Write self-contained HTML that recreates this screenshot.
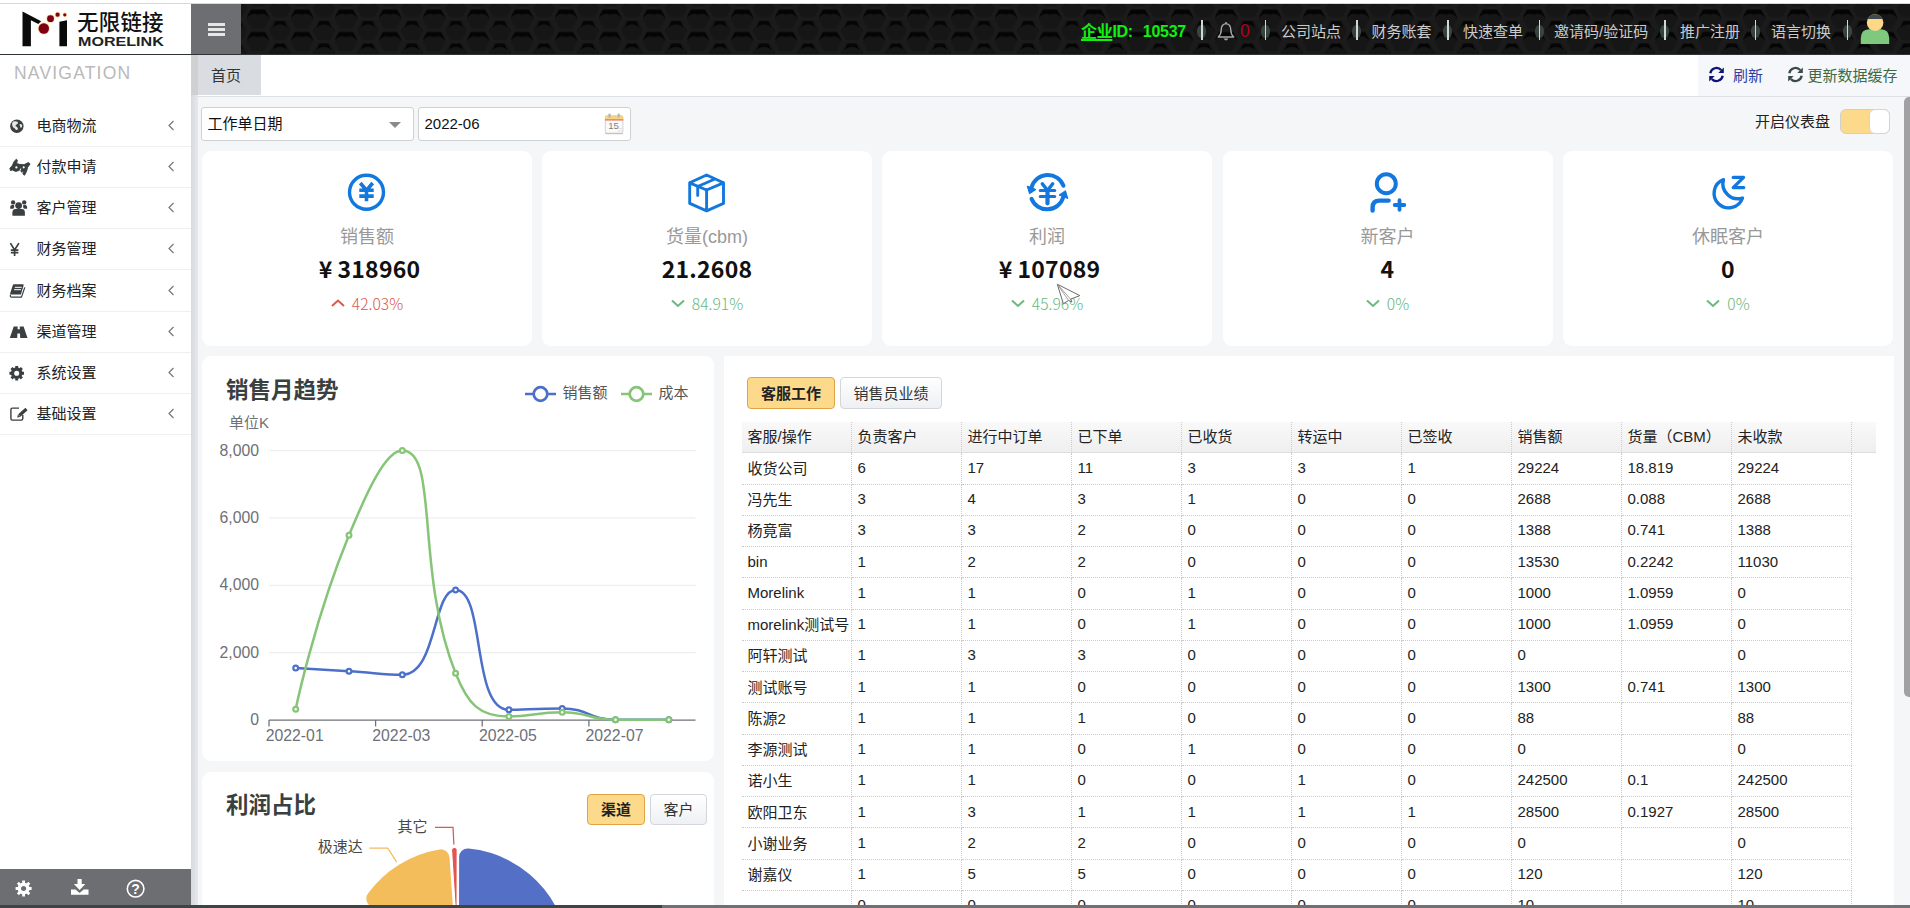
<!DOCTYPE html><html lang="zh"><head><meta charset="utf-8"><title>无限链接 MORELINK</title><style>
*{box-sizing:border-box;margin:0;padding:0}
html,body{width:1910px;height:908px;overflow:hidden;background:#fff}
body{font-family:"Liberation Sans","Noto Sans CJK SC",sans-serif;font-size:15px;color:#222;position:relative}
.abs{position:absolute}
.t{position:absolute;white-space:nowrap;line-height:1}
#hdr{left:191px;top:4px;width:1719px;height:50px;background:#171717;overflow:hidden}
#hdr svg.pat{position:absolute;left:0;top:0}
.hitem{position:absolute;top:0;height:50px;line-height:55px;color:#cacaca;font-size:15px;white-space:nowrap}
.hdiv{position:absolute;top:16px;width:1.400px;height:20px;background:#d4d6d6}
.hglow{position:absolute;top:21px;width:9px;height:13px;background:#3e4b4c;border-radius:45%;opacity:.85}
#side{left:0;top:55px;width:191px;height:814px;background:#fff}
.nav{position:absolute;left:0;width:191px;height:41.25px;border-bottom:1px solid #efefef}
.nav .lbl{position:absolute;left:36px;top:0;line-height:41px;font-size:15px;color:#222}
.nav svg.ic{position:absolute;left:9px;top:12px}
.nav .chev{position:absolute;left:167px;top:14px}
.card{position:absolute;background:#fff;border-radius:9px}
.kt{position:absolute;left:0;width:100%;text-align:center;white-space:nowrap}
.klabel{top:75.500px;font-size:18px;color:#999;line-height:20px}
.kval{top:101.500px;letter-spacing:0.25px;font-size:23px;font-weight:bold;color:#111;line-height:30px;font-family:"Noto Sans CJK SC","Liberation Sans",sans-serif}
.kpct{top:143px;font-size:15.600px;line-height:18px}
.btn{position:absolute;height:32px;border:1px solid #d3d6da;border-radius:4px;background:linear-gradient(#fff,#eef0f3);font-size:15px;line-height:31px;text-align:center;color:#333}
.btn.on{background:#fdd98c;border-color:#e0a542;font-weight:bold;color:#222}
table.g{position:absolute;border-collapse:separate;border-spacing:0;table-layout:fixed}
table.g td{height:31.25px;padding:0 0 2px 6px;font-size:15px;color:#222;border-right:1px dotted #ccc;border-bottom:1px dotted #ccc;white-space:nowrap;overflow:hidden}
table.g tr.h td{background:linear-gradient(#f9f9f9,#efefef);border-bottom:1px solid #ddd;padding-bottom:3px}
</style></head><body>
<div class="abs" style="left:0;top:3px;width:1910px;height:1px;background:#d5d9dd"></div>
<div class="abs" style="left:0;top:4px;width:191px;height:51px;background:#fff;border-bottom:1px solid #3a3f42"></div>
<svg class="abs" style="left:0;top:4px" width="191" height="50" viewBox="0 4 191 50">
<polygon points="22.5,11.6 41.2,21.2 38.3,23.9 30.9,20.2 30.9,46.3 22.5,46.3" fill="#0a0a0a"/>
<polygon points="59.4,21.8 67,20.3 67,46.3 59.4,46.3" fill="#0a0a0a"/>
<circle cx="43.8" cy="28.5" r="5.9" fill="#f6d98a"/><circle cx="43.8" cy="28.5" r="5.2" fill="#7d0014"/>
<circle cx="50.5" cy="18.7" r="4.1" fill="#f6d98a"/><circle cx="50.5" cy="18.7" r="3.4" fill="#7d0014"/>
<circle cx="57.6" cy="14.7" r="2.8" fill="#f6d98a"/><circle cx="57.6" cy="14.7" r="2.1" fill="#8a0016"/>
<circle cx="64.8" cy="14.8" r="2.2" fill="#f6d98a"/><circle cx="64.8" cy="14.8" r="1.6" fill="#8a0016"/>
</svg>
<div class="t" style="left:77px;top:9px;font-size:21.5px;font-weight:500;color:#111;letter-spacing:0.2px;font-family:'Noto Sans CJK SC',sans-serif;line-height:24px">无限链接</div>
<div class="t" style="left:77.5px;top:35px;font-size:13.2px;font-weight:bold;color:#222;line-height:13px;transform-origin:0 0;transform:scaleX(1.22)">MORELINK</div>
<div id="hdr" class="abs">
<svg class="pat" width="1719" height="51"><defs><pattern id="hx" x="12" y="4" width="44" height="22.500" patternUnits="userSpaceOnUse">
<rect width="44" height="22.500" fill="#1b1b1b"/>
<path d="M-0.500 11.250 L4.800 1.800 H17.200 L22.500 11.250 L17.200 20.700 H4.800 Z" fill="#161616"/>
<path d="M21.500 0 L26.800 -9.450 H39.200 L44.500 0 L39.200 9.450 H26.800 Z" fill="#161616"/>
<path d="M21.500 22.500 L26.800 13.050 H39.200 L44.500 22.500 L39.200 31.950 H26.800 Z" fill="#161616"/>
<path d="M-1.300 10.800 L3.900 1.500 H18.100 L23.300 10.800 L20 7.900 Q15.500 4.600 11 6.900 Q6.500 4.600 2 7.900 Z" fill="#050505"/>
<path d="M25.500 20 L28.500 13.050 H37.500 L40.500 20 L38 17.800 Q33 14.800 28 17.800 Z" fill="#050505"/>
<path d="M25.500 -2.500 L28.500 -9.450 H37.500 L40.500 -2.500 L38 -4.700 Q33 -7.700 28 -4.700 Z" fill="#050505"/>
</pattern></defs><rect width="1719" height="51" fill="url(#hx)"/></svg>
<div class="abs" style="left:0;top:0;width:50px;height:50px;background:#6d6e72"></div>
<div class="abs" style="left:17.300px;top:18.800px;width:16.500px;height:2.900px;background:#e6e6e6;box-shadow:0 5px 0 #e6e6e6,0 10px 0 #e6e6e6"></div>
<div class="hitem" style="left:890px;color:#10f010;font-weight:bold;font-size:16px;letter-spacing:-0.3px"><span style="text-decoration:underline;text-decoration-thickness:1.5px;text-underline-offset:2px">企业</span>ID:<span style="margin-left:10px">10537</span></div>
<div class="hglow" style="left:1006.2px"></div>
<div class="hdiv" style="left:1010.2px"></div>
<div class="hglow" style="left:1069.9px"></div>
<div class="hdiv" style="left:1073.9px"></div>
<div class="hglow" style="left:1161.2px"></div>
<div class="hdiv" style="left:1165.2px"></div>
<div class="hglow" style="left:1252.3px"></div>
<div class="hdiv" style="left:1256.3px"></div>
<div class="hglow" style="left:1343.9px"></div>
<div class="hdiv" style="left:1347.9px"></div>
<div class="hglow" style="left:1469.2px"></div>
<div class="hdiv" style="left:1473.2px"></div>
<div class="hglow" style="left:1560.1px"></div>
<div class="hdiv" style="left:1564.1px"></div>
<div class="hglow" style="left:1651.7px"></div>
<div class="hdiv" style="left:1655.7px"></div>
<svg class="abs" style="left:1025px;top:17px" width="20" height="22" viewBox="0 0 20 22"><path d="M10 2.600 C6 3.100 5.200 6.500 5.200 9 C5.200 12.500 4 14.500 2.200 16 H17.800 C16 14.500 14.800 12.500 14.800 9 C14.800 6.500 14 3.100 10 2.600 Z" fill="none" stroke="#a4a6a8" stroke-width="1.400" stroke-linejoin="round"/><path d="M7.600 17.500 Q10 21.500 12.400 17.500 Z" fill="#a4a6a8"/><circle cx="10" cy="2" r="1" fill="#a4a6a8"/></svg>
<div class="hitem" style="left:1049px;color:#b00020;font-size:17.500px">0</div>
<div class="hitem" style="left:1090.0px">公司站点</div>
<div class="hitem" style="left:1180.5px">财务账套</div>
<div class="hitem" style="left:1272.0px">快速查单</div>
<div class="hitem" style="left:1363.0px">邀请码/验证码</div>
<div class="hitem" style="left:1489.0px">推广注册</div>
<div class="hitem" style="left:1580.0px">语言切换</div>
<svg class="abs" style="left:1668px;top:8px" width="32" height="34" viewBox="1859 12 32 34">
<path d="M1860.8 44 V38 Q1861 29.5 1869 29.2 H1881 Q1889 29.5 1889.2 38 V44 Z" fill="#7fc97f"/>
<circle cx="1875.100" cy="22.6" r="8.3" fill="#fdd888"/>
<path d="M1867.6 19 A8.3 8.3 0 0 1 1882.600 19 Z" fill="#3f4a4c"/></svg>
</div>
<div class="abs" style="left:0;top:54px;width:1910px;height:1px;background:#2e3335;z-index:2"></div>
<div id="side" class="abs">
<div class="t" style="left:14px;top:9px;font-size:17.5px;letter-spacing:1.2px;color:#b9b9b9;line-height:18px">NAVIGATION</div>
<div class="abs" style="left:0;top:91px;width:191px;height:1px;background:#efefef"></div>
<div class="t" style="left:36.500px;top:60.7px;font-size:15px;color:#222;line-height:20px">电商物流</div>
<svg class="abs" style="left:167px;top:64.2px" width="8" height="13" viewBox="0 0 8 13"><path d="M6.500 2 L2 6.500 L6.500 11" fill="none" stroke="#777" stroke-width="1.200"/></svg>
<div class="abs" style="left:0;top:132px;width:191px;height:1px;background:#efefef"></div>
<div class="t" style="left:36.500px;top:101.7px;font-size:15px;color:#222;line-height:20px">付款申请</div>
<svg class="abs" style="left:167px;top:105.2px" width="8" height="13" viewBox="0 0 8 13"><path d="M6.500 2 L2 6.500 L6.500 11" fill="none" stroke="#777" stroke-width="1.200"/></svg>
<div class="abs" style="left:0;top:173px;width:191px;height:1px;background:#efefef"></div>
<div class="t" style="left:36.500px;top:142.7px;font-size:15px;color:#222;line-height:20px">客户管理</div>
<svg class="abs" style="left:167px;top:146.2px" width="8" height="13" viewBox="0 0 8 13"><path d="M6.500 2 L2 6.500 L6.500 11" fill="none" stroke="#777" stroke-width="1.200"/></svg>
<div class="abs" style="left:0;top:214px;width:191px;height:1px;background:#efefef"></div>
<div class="t" style="left:36.500px;top:183.7px;font-size:15px;color:#222;line-height:20px">财务管理</div>
<svg class="abs" style="left:167px;top:187.2px" width="8" height="13" viewBox="0 0 8 13"><path d="M6.500 2 L2 6.500 L6.500 11" fill="none" stroke="#777" stroke-width="1.200"/></svg>
<div class="abs" style="left:0;top:256px;width:191px;height:1px;background:#efefef"></div>
<div class="t" style="left:36.500px;top:225.7px;font-size:15px;color:#222;line-height:20px">财务档案</div>
<svg class="abs" style="left:167px;top:229.2px" width="8" height="13" viewBox="0 0 8 13"><path d="M6.500 2 L2 6.500 L6.500 11" fill="none" stroke="#777" stroke-width="1.200"/></svg>
<div class="abs" style="left:0;top:297px;width:191px;height:1px;background:#efefef"></div>
<div class="t" style="left:36.500px;top:266.7px;font-size:15px;color:#222;line-height:20px">渠道管理</div>
<svg class="abs" style="left:167px;top:270.2px" width="8" height="13" viewBox="0 0 8 13"><path d="M6.500 2 L2 6.500 L6.500 11" fill="none" stroke="#777" stroke-width="1.200"/></svg>
<div class="abs" style="left:0;top:338px;width:191px;height:1px;background:#efefef"></div>
<div class="t" style="left:36.500px;top:307.7px;font-size:15px;color:#222;line-height:20px">系统设置</div>
<svg class="abs" style="left:167px;top:311.2px" width="8" height="13" viewBox="0 0 8 13"><path d="M6.500 2 L2 6.500 L6.500 11" fill="none" stroke="#777" stroke-width="1.200"/></svg>
<div class="abs" style="left:0;top:379px;width:191px;height:1px;background:#efefef"></div>
<div class="t" style="left:36.500px;top:348.7px;font-size:15px;color:#222;line-height:20px">基础设置</div>
<svg class="abs" style="left:167px;top:352.2px" width="8" height="13" viewBox="0 0 8 13"><path d="M6.500 2 L2 6.500 L6.500 11" fill="none" stroke="#777" stroke-width="1.200"/></svg>
<svg class="abs" style="left:0;top:0" width="191" height="814" viewBox="0 55 191 814">
<circle cx="16.850" cy="126.200" r="6.700" fill="#3a3f42"/>
<path d="M13.200 121.600 Q15.500 120.600 17.600 121.800 Q18.600 123.400 17 124.300 Q15.200 124.600 15.600 126.300 Q17.400 126.800 18 128.400 Q17.400 130.600 15.800 129.800 Q14.800 127.800 13 127.200 Q11.600 125.200 12.200 123 Z M19.600 124 Q21.400 123.600 22.200 125.400 Q22 127.600 20.800 128 Q19.600 126.400 19.600 124 Z" fill="#fff" opacity=".88"/>
<path d="M9.900 168.300 L12.300 165.500 L14.300 161.200 L16.400 159.200 L17.400 160.300 L16.600 163.400 L19.300 164.300 L20.600 166.800 L19.200 170.400 L15.600 171.500 L12.600 170.100 L10.400 170.600 Z" fill="#3a3f42" stroke="#3a3f42" stroke-width=".9" stroke-linejoin="round"/>
<path d="M19.800 164.300 L24 164.700 L28.400 162.500 L30.100 163.900 L27.600 167.400 L26.700 171 L24.600 175.200 L22.900 174.100 L23.700 171.600 L21.400 172.100 L20.800 170.100 L22.400 168.700 L20.400 168.100 Z" fill="#3a3f42" stroke="#3a3f42" stroke-width=".9" stroke-linejoin="round"/>
<circle cx="16.400" cy="167.400" r="1.150" fill="#fff"/><circle cx="23.700" cy="167.300" r="1.100" fill="#fff"/>
<circle cx="18.650" cy="205.600" r="3.400" fill="#3a3f42"/>
<path d="M12.400 215.700 V212.600 Q12.500 209.300 15.400 209.100 H21.900 Q24.800 209.300 24.900 212.600 V215.700 Z" fill="#3a3f42"/>
<circle cx="13.100" cy="202.400" r="2.200" fill="#3a3f42"/><circle cx="24.200" cy="202.400" r="2.200" fill="#3a3f42"/>
<path d="M10.200 208.800 V206.800 Q10.300 204.900 12.200 204.900 H14 Q14.800 207 13.400 208.800 Z M27.100 208.800 V206.800 Q27 204.900 25.100 204.900 H23.300 Q22.500 207 23.900 208.800 Z" fill="#3a3f42"/>
<path d="M10.400 243.100 L14.600 249.900 L18.900 243.100 M14.600 249.500 V256 M10.800 250.100 H18.400 M10.800 252.700 H18.400" fill="none" stroke="#3a3f42" stroke-width="1.700"/>
<path d="M14 284.300 H22.800 Q23.900 284.300 23.600 285.500 L20.900 294.400 H11 Q9.800 294.400 10.200 293.200 L12.800 285.300 Q13.200 284.300 14 284.300 Z" fill="#3a3f42"/>
<path d="M10.600 294.600 Q9.700 297.100 11.800 297.100 H21.500 L24.800 287.400" fill="none" stroke="#3a3f42" stroke-width="1.200" stroke-linejoin="round"/>
<path d="M14.800 287.300 H21.800 M14.100 289.700 H21.100" stroke="#fff" stroke-width="1"/>
<path d="M13.700 326.400 H17.700 L17.200 338 H9.800 Z M19.700 326.400 H23.600 L27.500 338 H20.200 Z M17.300 329.200 H20 V333.400 H17.300 Z" fill="#3a3f42"/>
<circle cx="16.700" cy="373.200" r="4.200" fill="none" stroke="#3a3f42" stroke-width="3.300"/>
<g stroke="#3a3f42" stroke-width="2.900" transform="translate(16.700 373.200)"><path d="M0 -7.300 V-5 M0 5 V7.300 M-7.300 0 H-5 M5 0 H7.300 M-5.200 -5.200 L-3.500 -3.500 M3.500 3.500 L5.200 5.200 M-5.200 5.200 L-3.500 3.500 M3.500 -3.500 L5.200 -5.200"/></g>
<path d="M22.800 415 V418.600 Q22.800 420.100 21.300 420.100 H12.400 Q10.900 420.100 10.900 418.600 V409.600 Q10.900 408.100 12.400 408.100 H19" fill="none" stroke="#3a3f42" stroke-width="1.400"/>
<path d="M19.300 415.500 L26.500 409" stroke="#3a3f42" stroke-width="3.200"/><path d="M17.200 417.600 L17.900 414.400 L20.400 416.900 Z" fill="#3a3f42"/>
</svg>
</div>
<div class="abs" style="left:0;top:869px;width:191px;height:36px;background:#6d6e72"></div>
<svg class="abs" style="left:0;top:869px" width="191" height="36" viewBox="0 869 191 36">
<g transform="translate(23.600 888.500)"><circle r="4.300" fill="none" stroke="#fff" stroke-width="3.400"/><g stroke="#fff" stroke-width="2.800"><path d="M0 -8 V-5 M0 5 V8 M-8 0 H-5 M5 0 H8 M-5.700 -5.700 L-3.600 -3.600 M3.600 3.600 L5.700 5.700 M-5.700 5.700 L-3.600 3.600 M3.600 -3.600 L5.700 -5.700"/></g></g>
<path d="M77.500 879 H81.700 V884 H85.300 L79.600 890 L73.900 884 H77.500 Z" fill="#fff"/><path d="M71 889.500 H75.500 L79.600 893 L83.700 889.500 H88.500 V894.800 H71 Z" fill="#fff"/>
<circle cx="135.600" cy="888.700" r="8.300" fill="none" stroke="#fff" stroke-width="1.600"/>
<text x="135.600" y="894" text-anchor="middle" font-family="Liberation Sans,sans-serif" font-weight="bold" font-size="14" fill="#fff">?</text>
</svg>
<div class="abs" style="left:191px;top:55px;width:7px;height:40px;background:#cfd0d0"></div>
<div class="abs" style="left:191px;top:95px;width:7px;height:810px;background:linear-gradient(90deg,#d6d9dd,#e6e8ec)"></div>
<div class="abs" style="left:198px;top:55px;width:1712px;height:41px;background:#fff"></div>
<div class="abs" style="left:198px;top:55px;width:63px;height:40px;background:#d9dde1"></div>
<div class="t" style="left:211px;top:67px;font-size:15px;color:#333;line-height:17px">首页</div>
<div class="abs" style="left:1698px;top:55px;width:212px;height:41px;background:#f5f7fa"></div>
<div class="abs" style="left:198px;top:96px;width:1712px;height:1px;background:#dcdfe3"></div>
<svg class="abs" style="left:1707.5px;top:66.0px" width="17" height="17" viewBox="0 0 17 17"><path d="M2.300 7.200 A6.300 6.300 0 0 1 13.200 4.100" fill="none" stroke="#10107a" stroke-width="2.300"/><path d="M15.800 1.500 V7 H10.300 Z" fill="#10107a"/><path d="M14.700 9.800 A6.300 6.300 0 0 1 3.800 12.900" fill="none" stroke="#10107a" stroke-width="2.300"/><path d="M1.200 15.500 V10 H6.700 Z" fill="#10107a"/></svg>
<div class="t" style="left:1733px;top:67px;font-size:15px;color:#2a3fa8;line-height:17px">刷新</div>
<svg class="abs" style="left:1787.0px;top:66.0px" width="17" height="17" viewBox="0 0 17 17"><path d="M2.300 7.200 A6.300 6.300 0 0 1 13.200 4.100" fill="none" stroke="#3c4a44" stroke-width="2.300"/><path d="M15.800 1.500 V7 H10.300 Z" fill="#3c4a44"/><path d="M14.700 9.800 A6.300 6.300 0 0 1 3.800 12.900" fill="none" stroke="#3c4a44" stroke-width="2.300"/><path d="M1.200 15.500 V10 H6.700 Z" fill="#3c4a44"/></svg>
<div class="t" style="left:1807.500px;top:67px;font-size:15px;color:#3f6a42;line-height:17px">更新数据缓存</div>
<div class="abs" style="left:198px;top:97px;width:1712px;height:808px;background:#f5f6f8"></div>
<div class="abs" style="left:1904px;top:97px;width:8px;height:600px;background:#a1a1a3;border-radius:5px 0 0 5px"></div>
<div class="abs" style="left:201px;top:107px;width:213px;height:34px;background:#fff;border:1px solid #cfd2d5;border-radius:3px"></div>
<div class="t" style="left:207.500px;top:115px;font-size:15px;color:#111;line-height:18px">工作单日期</div>
<div class="abs" style="left:389px;top:121.500px;width:0;height:0;border-left:6px solid transparent;border-right:6px solid transparent;border-top:6.500px solid #8a8a8a"></div>
<div class="abs" style="left:418px;top:107px;width:213px;height:34px;background:#fff;border:1px solid #cfd2d5;border-radius:3px"></div>
<div class="t" style="left:424.500px;top:115px;font-size:15px;color:#111;line-height:18px">2022-06</div>
<svg class="abs" style="left:603px;top:112px" width="22" height="24" viewBox="603 112 22 24"><rect x="605.300" y="116" width="17.600" height="17.200" rx="1.500" fill="#fafafa" stroke="#d2d2d2"/><path d="M605.300 133.600 H622.900" stroke="#c4c4c4" stroke-width="1.200"/><path d="M605 119.500 V117 Q605 115.200 606.800 115.200 H621.400 Q623.200 115.200 623.200 117 V119.500 Z" fill="#f8d37c"/><rect x="605" y="119.300" width="18.200" height="1.200" fill="#e0695c"/><rect x="608.400" y="113.500" width="2.200" height="4.200" rx="1" fill="#b5b5b5"/><rect x="617.600" y="113.500" width="2.200" height="4.200" rx="1" fill="#b5b5b5"/><text x="613.600" y="128.600" font-size="9.500" text-anchor="middle" font-family="Liberation Sans,sans-serif" fill="#7d7d7d">15</text><path d="M618.500 128.500 H622 M618.500 131 H622" stroke="#c8c8c8" stroke-width="1" stroke-dasharray="1 1"/></svg>
<div class="t" style="left:1755px;top:112.500px;font-size:15px;color:#222;line-height:18px">开启仪表盘</div>
<div class="abs" style="left:1840px;top:109px;width:50px;height:25px;background:#fdd98c;border:1px solid #cfcfcf;border-radius:6px"></div>
<div class="abs" style="left:1868.500px;top:109px;width:21.500px;height:25px;background:#fff;border:1px solid #d5d5d5;border-radius:6px"></div>
<svg class="abs" style="left:0;top:0;z-index:3;pointer-events:none" width="1910" height="908">
<circle cx="366.500" cy="192.300" r="17" fill="none" stroke="#1278de" stroke-width="3.400"/><path d="M360.300 183 L366.500 190.500 L372.700 183 M366.500 190 V201.300 M359.300 190.300 H373.700 M359.300 196.100 H373.700" fill="none" stroke="#1278de" stroke-width="3.600"/>
<path d="M706.600 175 L723.500 182.800 V203.400 L706.600 210.800 L689.700 203.400 V182.800 Z M689.700 182.800 L706.600 190 L723.500 182.800 M706.600 190 V210.800 M715 179 L697.700 186.500 V195.600" fill="none" stroke="#1278de" stroke-width="2.900" stroke-linejoin="round" stroke-linecap="round"/>
<path d="M1063.500 185.800 A16.800 16.800 0 0 0 1031.500 187.500" fill="none" stroke="#1278de" stroke-width="4" stroke-linecap="round"/><path d="M1027.200 186 L1036 189.500 L1029.500 193.800 Z" fill="#1278de" stroke="#1278de" stroke-width="1" stroke-linejoin="round"/><path d="M1031.500 198.800 A16.800 16.800 0 0 0 1063.300 197" fill="none" stroke="#1278de" stroke-width="4" stroke-linecap="round"/><path d="M1067.800 198.500 L1059 195 L1065.500 190.700 Z" fill="#1278de" stroke="#1278de" stroke-width="1" stroke-linejoin="round"/><path d="M1042.300 183.800 L1047.500 190.500 L1052.700 183.800" fill="none" stroke="#1278de" stroke-width="3.500" stroke-linecap="round"/><path d="M1047.500 190 V203.300" stroke="#1278de" stroke-width="4.200" stroke-linecap="round"/><path d="M1040.300 190.500 H1054.700 M1040.300 196.500 H1054.700" stroke="#1278de" stroke-width="3.200" stroke-linecap="round"/>
<circle cx="1386.300" cy="183.700" r="9.500" fill="none" stroke="#1278de" stroke-width="4"/><path d="M1372.600 210.500 V207.500 Q1372.600 200.600 1379.500 200.600 H1388.600" fill="none" stroke="#1278de" stroke-width="4.400" stroke-linecap="round"/><path d="M1399.500 200.200 V209.800 M1394.700 205 H1404.300" stroke="#1278de" stroke-width="3.800" stroke-linecap="round"/>
<path d="M1723.500 179.600 A14.600 14.600 0 1 0 1742.500 198 A15 15 0 0 1 1723.500 179.600 Z" fill="none" stroke="#1278de" stroke-width="3.400" stroke-linejoin="round"/><path d="M1733.200 177.400 H1743.600 L1733.200 187.600 H1743.800" fill="none" stroke="#1278de" stroke-width="3.200" stroke-linejoin="round" stroke-linecap="round"/>
</svg>
<div class="card" style="left:202.0px;top:151px;width:330px;height:195px">
<div class="kt klabel">销售额</div><div class="kt kval"><span style="margin:0 5px 0 5px">¥</span>318960</div>
<div class="kt kpct" style="color:#e0584a"><svg width="14" height="10" viewBox="0 0 14 10" style="margin-right:7px;position:relative;top:-2px"><path d="M1 8 L7 2.500 L13 8" fill="none" stroke="#e0584a" stroke-width="2"/></svg><span style="font-family:'Noto Sans CJK SC',sans-serif;font-weight:300">42.03%</span></div>
</div>
<div class="card" style="left:542.0px;top:151px;width:330px;height:195px">
<div class="kt klabel">货量(cbm)</div><div class="kt kval">21.2608</div>
<div class="kt kpct" style="color:#6cb77c"><svg width="14" height="10" viewBox="0 0 14 10" style="margin-right:7px;position:relative;top:-2px"><path d="M1 2.500 L7 8 L13 2.500" fill="none" stroke="#6cb77c" stroke-width="2"/></svg><span style="font-family:'Noto Sans CJK SC',sans-serif;font-weight:300">84.91%</span></div>
</div>
<div class="card" style="left:882.0px;top:151px;width:330px;height:195px">
<div class="kt klabel">利润</div><div class="kt kval"><span style="margin:0 5px 0 5px">¥</span>107089</div>
<div class="kt kpct" style="color:#6cb77c"><svg width="14" height="10" viewBox="0 0 14 10" style="margin-right:7px;position:relative;top:-2px"><path d="M1 2.500 L7 8 L13 2.500" fill="none" stroke="#6cb77c" stroke-width="2"/></svg><span style="font-family:'Noto Sans CJK SC',sans-serif;font-weight:300">45.96%</span></div>
</div>
<div class="card" style="left:1222.5px;top:151px;width:330px;height:195px">
<div class="kt klabel">新客户</div><div class="kt kval">4</div>
<div class="kt kpct" style="color:#6cb77c"><svg width="14" height="10" viewBox="0 0 14 10" style="margin-right:7px;position:relative;top:-2px"><path d="M1 2.500 L7 8 L13 2.500" fill="none" stroke="#6cb77c" stroke-width="2"/></svg><span style="font-family:'Noto Sans CJK SC',sans-serif;font-weight:300">0%</span></div>
</div>
<div class="card" style="left:1563.0px;top:151px;width:330px;height:195px">
<div class="kt klabel">休眠客户</div><div class="kt kval">0</div>
<div class="kt kpct" style="color:#6cb77c"><svg width="14" height="10" viewBox="0 0 14 10" style="margin-right:7px;position:relative;top:-2px"><path d="M1 2.500 L7 8 L13 2.500" fill="none" stroke="#6cb77c" stroke-width="2"/></svg><span style="font-family:'Noto Sans CJK SC',sans-serif;font-weight:300">0%</span></div>
</div>
<div class="card" style="left:202px;top:356px;width:512px;height:405px"></div>
<div class="t" style="left:226px;top:378px;font-size:22.500px;font-weight:bold;color:#3a3f40;line-height:26px">销售月趋势</div>
<svg class="abs" style="left:202px;top:356px" width="512" height="405" viewBox="202 356 512 405" font-family="Liberation Sans,Noto Sans CJK SC,sans-serif">
<path d="M269.0 450.5 H695.5" stroke="#eceef1" stroke-width="1.250"/>
<path d="M269.0 517.9 H695.5" stroke="#eceef1" stroke-width="1.250"/>
<path d="M269.0 585.3 H695.5" stroke="#eceef1" stroke-width="1.250"/>
<path d="M269.0 652.7 H695.5" stroke="#eceef1" stroke-width="1.250"/>
<path d="M269.0 720.100 H695.5" stroke="#6e7079" stroke-width="1.250"/>
<path d="M269.0 720.100 V726.500" stroke="#6e7079" stroke-width="1.250"/>
<path d="M375.6 720.100 V726.500" stroke="#6e7079" stroke-width="1.250"/>
<path d="M482.2 720.100 V726.500" stroke="#6e7079" stroke-width="1.250"/>
<path d="M588.9 720.100 V726.500" stroke="#6e7079" stroke-width="1.250"/>
<text x="259" y="455.5" text-anchor="end" font-size="15.800" fill="#6e7079">8,000</text>
<text x="259" y="522.9" text-anchor="end" font-size="15.800" fill="#6e7079">6,000</text>
<text x="259" y="590.3" text-anchor="end" font-size="15.800" fill="#6e7079">4,000</text>
<text x="259" y="657.7" text-anchor="end" font-size="15.800" fill="#6e7079">2,000</text>
<text x="259" y="725.1" text-anchor="end" font-size="15.800" fill="#6e7079">0</text>
<text x="294.7" y="741" text-anchor="middle" font-size="15.800" fill="#6e7079">2022-01</text>
<text x="401.3" y="741" text-anchor="middle" font-size="15.800" fill="#6e7079">2022-03</text>
<text x="507.9" y="741" text-anchor="middle" font-size="15.800" fill="#6e7079">2022-05</text>
<text x="614.5" y="741" text-anchor="middle" font-size="15.800" fill="#6e7079">2022-07</text>
<text x="229" y="428" font-size="15" fill="#6e7079">单位K</text>
<path d="M295.66 668.10C295.66 668.10 322.32 669.55 348.97 671.20C375.63 672.85 383.73 674.70 402.28 674.70C437.04 674.70 432.52 590.00 455.59 590.00C485.83 590.00 471.01 709.80 508.91 709.80C524.32 709.80 535.85 708.50 562.22 708.50C589.16 708.50 588.59 719.70 615.53 719.70C641.90 719.70 668.84 719.70 668.84 719.70" fill="none" stroke="#4c6fc9" stroke-width="2.500" stroke-linejoin="bevel"/>
<circle cx="295.7" cy="668.1" r="2.400" fill="#fff" stroke="#4c6fc9" stroke-width="2.200"/>
<circle cx="349.0" cy="671.2" r="2.400" fill="#fff" stroke="#4c6fc9" stroke-width="2.200"/>
<circle cx="402.3" cy="674.7" r="2.400" fill="#fff" stroke="#4c6fc9" stroke-width="2.200"/>
<circle cx="455.6" cy="590.0" r="2.400" fill="#fff" stroke="#4c6fc9" stroke-width="2.200"/>
<circle cx="508.9" cy="709.8" r="2.400" fill="#fff" stroke="#4c6fc9" stroke-width="2.200"/>
<circle cx="562.2" cy="708.5" r="2.400" fill="#fff" stroke="#4c6fc9" stroke-width="2.200"/>
<circle cx="615.5" cy="719.7" r="2.400" fill="#fff" stroke="#4c6fc9" stroke-width="2.200"/>
<circle cx="668.8" cy="719.7" r="2.400" fill="#fff" stroke="#4c6fc9" stroke-width="2.200"/>
<path d="M295.66 709.30C295.66 709.30 314.57 618.75 348.97 535.30C367.88 489.40 386.06 450.60 402.28 450.60C439.37 450.60 414.59 570.92 455.59 673.20C467.91 703.92 478.92 716.60 508.91 716.60C532.24 716.60 535.65 712.20 562.22 712.20C588.96 712.20 588.74 719.70 615.53 719.70C642.06 719.70 668.84 719.70 668.84 719.70" fill="none" stroke="#86c477" stroke-width="2.500" stroke-linejoin="bevel"/>
<circle cx="295.7" cy="709.3" r="2.400" fill="#fff" stroke="#86c477" stroke-width="2.200"/>
<circle cx="349.0" cy="535.3" r="2.400" fill="#fff" stroke="#86c477" stroke-width="2.200"/>
<circle cx="402.3" cy="450.6" r="2.400" fill="#fff" stroke="#86c477" stroke-width="2.200"/>
<circle cx="455.6" cy="673.2" r="2.400" fill="#fff" stroke="#86c477" stroke-width="2.200"/>
<circle cx="508.9" cy="716.6" r="2.400" fill="#fff" stroke="#86c477" stroke-width="2.200"/>
<circle cx="562.2" cy="712.2" r="2.400" fill="#fff" stroke="#86c477" stroke-width="2.200"/>
<circle cx="615.5" cy="719.7" r="2.400" fill="#fff" stroke="#86c477" stroke-width="2.200"/>
<circle cx="668.8" cy="719.7" r="2.400" fill="#fff" stroke="#86c477" stroke-width="2.200"/>
<path d="M525 394 H556" stroke="#4c6fc9" stroke-width="2.500"/><circle cx="540.500" cy="394" r="6.800" fill="#fff" stroke="#4c6fc9" stroke-width="2.700"/>
<text x="562.500" y="397.500" font-size="15" fill="#555">销售额</text>
<path d="M621 394 H652" stroke="#86c477" stroke-width="2.500"/><circle cx="636.500" cy="394" r="6.800" fill="#fff" stroke="#86c477" stroke-width="2.700"/>
<text x="658.500" y="397.500" font-size="15" fill="#555">成本</text>
</svg>
<div class="card" style="left:202px;top:772px;width:512px;height:200px;border-radius:9px 9px 0 0"></div>
<div class="t" style="left:226px;top:793px;font-size:22.500px;font-weight:bold;color:#3a3f40;line-height:26px">利润占比</div>
<div class="btn on" style="left:587px;top:794px;width:58px;height:31px;line-height:30px">渠道</div>
<div class="btn" style="left:650px;top:794px;width:57px;height:31px;line-height:30px">客户</div>
<svg class="abs" style="left:202px;top:772px" width="512" height="133" viewBox="202 772 512 133" font-family="Liberation Sans,Noto Sans CJK SC,sans-serif">
<path d="M457.70 959.00 L457.70 857.19 A10.00 10.00 0 0 1 468.68 847.24 A112.3 112.3 0 0 1 523.09 1050.30 A10.00 10.00 0 0 1 508.61 1047.17 Z" fill="#5470c6" stroke="#fff" stroke-width="2.500" stroke-linejoin="round"/>
<path d="M457.70 959.00 L450.86 850.23 A3.26 3.26 0 0 1 454.01 846.76 A112.3 112.3 0 0 1 454.53 846.74 A3.26 3.26 0 0 1 457.89 850.01 Z" fill="#e25550" stroke="#fff" stroke-width="2.500" stroke-linejoin="round"/>
<path d="M457.70 959.00 L369.98 907.33 A10.00 10.00 0 0 1 366.97 892.82 A112.3 112.3 0 0 1 439.15 848.24 A10.00 10.00 0 0 1 450.78 857.43 Z" fill="#f4bd5c" stroke="#fff" stroke-width="2.500" stroke-linejoin="round"/>
<path d="M435 827.400 H453 L453.900 844.600" fill="none" stroke="#e25550" stroke-width="1.250"/>
<path d="M369.300 848.200 H387.800 L396.700 862.100" fill="none" stroke="#f4bd5c" stroke-width="1.250"/>
<text x="397.600" y="831.800" font-size="15" fill="#4a4a4a">其它</text>
<text x="317.700" y="851.700" font-size="15" fill="#4a4a4a">极速达</text>
</svg>
<div class="card" style="left:724px;top:356px;width:1170px;height:560px;border-radius:0"></div>
<div class="btn on" style="left:747px;top:377px;width:88px">客服工作</div>
<div class="btn" style="left:840px;top:377px;width:102px">销售员业绩</div>
<div class="abs" style="left:741.500px;top:422px;width:1134px;height:31.250px;background:linear-gradient(#f9f9f9,#efefef);border-bottom:1px solid #ddd"></div>
<table class="g" style="left:741.500px;top:422px;width:1110px"><colgroup>
<col style="width:110px">
<col style="width:110px">
<col style="width:110px">
<col style="width:110px">
<col style="width:110px">
<col style="width:110px">
<col style="width:110px">
<col style="width:110px">
<col style="width:110px">
<col style="width:120px">
</colgroup><tr class="h"><td>客服/操作</td><td>负责客户</td><td>进行中订单</td><td>已下单</td><td>已收货</td><td>转运中</td><td>已签收</td><td>销售额</td><td>货量（CBM）</td><td>未收款</td></tr>
<tr><td>收货公司</td><td>6</td><td>17</td><td>11</td><td>3</td><td>3</td><td>1</td><td>29224</td><td>18.819</td><td>29224</td></tr>
<tr><td>冯先生</td><td>3</td><td>4</td><td>3</td><td>1</td><td>0</td><td>0</td><td>2688</td><td>0.088</td><td>2688</td></tr>
<tr><td>杨竟富</td><td>3</td><td>3</td><td>2</td><td>0</td><td>0</td><td>0</td><td>1388</td><td>0.741</td><td>1388</td></tr>
<tr><td>bin</td><td>1</td><td>2</td><td>2</td><td>0</td><td>0</td><td>0</td><td>13530</td><td>0.2242</td><td>11030</td></tr>
<tr><td>Morelink</td><td>1</td><td>1</td><td>0</td><td>1</td><td>0</td><td>0</td><td>1000</td><td>1.0959</td><td>0</td></tr>
<tr><td>morelink测试号</td><td>1</td><td>1</td><td>0</td><td>1</td><td>0</td><td>0</td><td>1000</td><td>1.0959</td><td>0</td></tr>
<tr><td>阿轩测试</td><td>1</td><td>3</td><td>3</td><td>0</td><td>0</td><td>0</td><td>0</td><td></td><td>0</td></tr>
<tr><td>测试账号</td><td>1</td><td>1</td><td>0</td><td>0</td><td>0</td><td>0</td><td>1300</td><td>0.741</td><td>1300</td></tr>
<tr><td>陈源2</td><td>1</td><td>1</td><td>1</td><td>0</td><td>0</td><td>0</td><td>88</td><td></td><td>88</td></tr>
<tr><td>李源测试</td><td>1</td><td>1</td><td>0</td><td>1</td><td>0</td><td>0</td><td>0</td><td></td><td>0</td></tr>
<tr><td>诺小生</td><td>1</td><td>1</td><td>0</td><td>0</td><td>1</td><td>0</td><td>242500</td><td>0.1</td><td>242500</td></tr>
<tr><td>欧阳卫东</td><td>1</td><td>3</td><td>1</td><td>1</td><td>1</td><td>1</td><td>28500</td><td>0.1927</td><td>28500</td></tr>
<tr><td>小谢业务</td><td>1</td><td>2</td><td>2</td><td>0</td><td>0</td><td>0</td><td>0</td><td></td><td>0</td></tr>
<tr><td>谢嘉仪</td><td>1</td><td>5</td><td>5</td><td>0</td><td>0</td><td>0</td><td>120</td><td></td><td>120</td></tr>
<tr><td></td><td>0</td><td>0</td><td>0</td><td>0</td><td>0</td><td>0</td><td>10</td><td></td><td>10</td></tr>
</table>
<svg class="abs" style="left:1050px;top:278px;z-index:5" width="40" height="34" viewBox="1050 278 40 34"><path d="M1057.300 284.200 L1079.800 295.600 L1070.600 299.200 L1071.900 302 L1068.600 300.500 L1063.300 303.700 Z" fill="rgba(255,255,255,.82)" stroke="#6a6a6a" stroke-width="1" stroke-linejoin="round"/><path d="M1057.300 284.200 L1070.600 299.200 M1057.300 284.200 L1068.600 300.500" fill="none" stroke="#8a8a8a" stroke-width=".8"/></svg>
<div class="abs" style="left:0;top:905px;width:1910px;height:3px;background:#6f7074;z-index:9"></div>
<div class="abs" style="left:0;top:905px;width:662px;height:3px;background:#3d4445;z-index:10"></div>
</body></html>
